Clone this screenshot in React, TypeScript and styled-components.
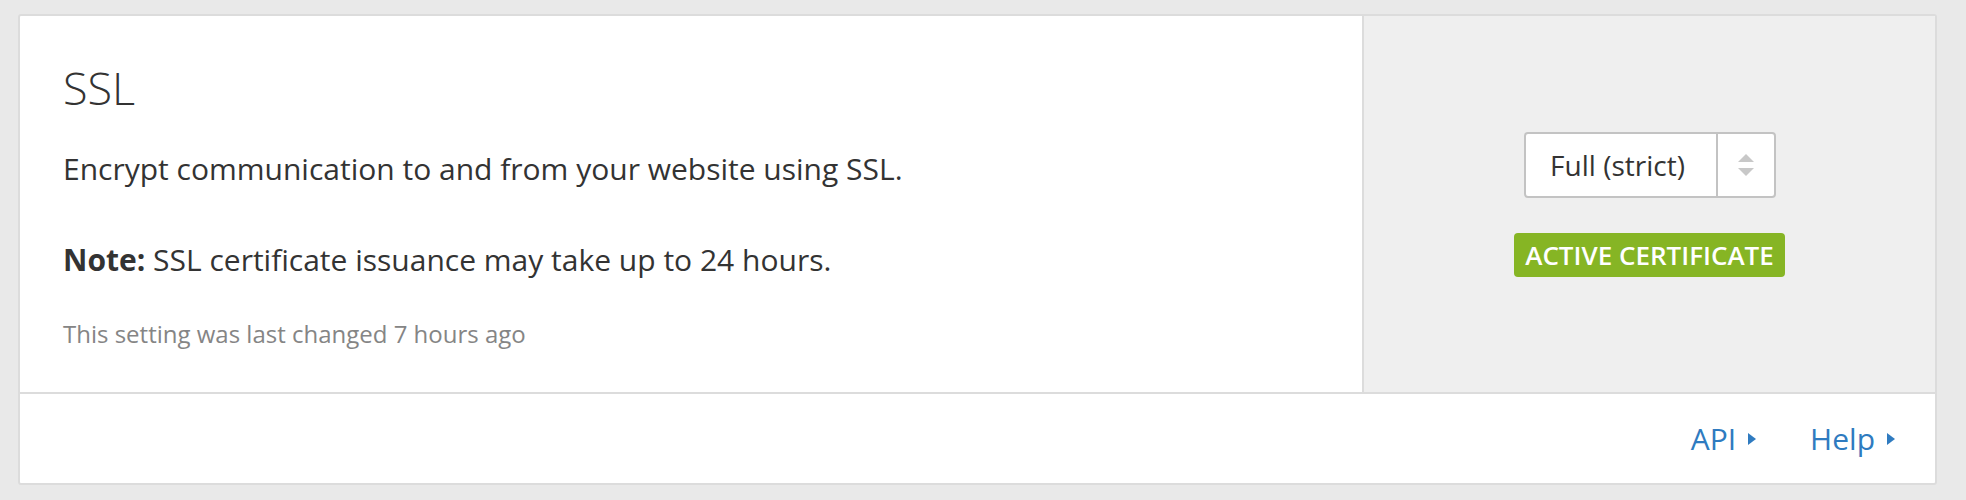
import styled, { createGlobalStyle } from "styled-components";

const GlobalStyle = createGlobalStyle`
  html, body {
    margin: 0;
    padding: 0;
    background: #e9e9e9;
  }
  body {
    font-family: "Open Sans", "Noto Sans", Arial, sans-serif;
    color: #333;
  }
`;

const PageDiv = styled.div`
  padding: 14px 29px 15px 18px;
  box-sizing: border-box;
  height: 500px;
`;

const CardDiv = styled.div`
  background: #fff;
  border: 2px solid #dcdcdc;
  border-radius: 3px;
  overflow: hidden;
`;

const BodyDiv = styled.div`
  display: flex;
  border-bottom: 2px solid #dcdcdc;
`;

const InfoDiv = styled.div`
  flex: 1;
  display: flex;
  flex-direction: column;
  padding: 45px 43px 40px 43px;
  border-right: 2px solid #dcdcdc;
`;

const Title = styled.h3`
  margin: 0 0 31px;
  font-size: 45px;
  line-height: 54px;
  font-weight: 300;
  color: #333;
`;

const Text = styled.p<{ $gap: number }>`
  margin: 0 0 ${(p) => p.$gap}px;
  font-size: 30px;
  line-height: 45px;
  color: #333;

  strong {
    font-weight: 700;
  }
`;

const Changed = styled.div`
  font-size: 24px;
  line-height: 36px;
  color: #858585;
`;

const ControlDiv = styled.div`
  width: 571px;
  background: #efefef;
  display: flex;
  flex-direction: column;
  align-items: center;
  justify-content: center;
  gap: 35px;
`;

const SelectBox = styled.div`
  display: flex;
  width: 252px;
  height: 66px;
  box-sizing: border-box;
  border: 2px solid #c3c3c3;
  border-radius: 4px;
  background: #fff;
`;

const SelectValue = styled.div`
  flex: 1;
  display: flex;
  align-items: center;
  justify-content: center;
  padding-right: 6px;
  font-size: 28px;
  color: #333;
  border-right: 2px solid #c3c3c3;
`;

const SelectArrows = styled.div`
  width: 56px;
  display: flex;
  flex-direction: column;
  align-items: center;
  justify-content: center;
  gap: 6px;
`;

const Badge = styled.span`
  display: inline-block;
  height: 44px;
  line-height: 44px;
  padding: 0 11px;
  border-radius: 4px;
  background: #86b524;
  color: #fff;
  font-size: 26px;
  font-weight: 600;
`;

const FooterDiv = styled.div`
  height: 89px;
  display: flex;
  align-items: center;
  justify-content: flex-end;
  gap: 54px;
  padding-right: 40px;
`;

const FooterLink = styled.a`
  display: inline-flex;
  align-items: center;
  gap: 12px;
  font-size: 30px;
  line-height: 45px;
  color: #2f7bc0;
  text-decoration: none;
`;

const Caret = () => (
  <svg width="8" height="12" viewBox="0 0 8 12">
    <path d="M0 0 L8 6 L0 12 Z" fill="#2f7bc0" />
  </svg>
);

const Arrow = ({ up }: { up?: boolean }) => (
  <svg width="16" height="8" viewBox="0 0 16 8">
    <path d={up ? "M0 8 L8 0 L16 8 Z" : "M0 0 L16 0 L8 8 Z"} fill="#c8c8c8" />
  </svg>
);

export default function App() {
  return (
    <>
      <GlobalStyle />
      <PageDiv>
        <CardDiv>
          <BodyDiv>
            <InfoDiv>
              <Title>SSL</Title>
              <Text $gap={46}>
                Encrypt communication to and from your website using SSL.
              </Text>
              <Text $gap={34}>
                <strong>Note:</strong> SSL certificate issuance may take up to
                24 hours.
              </Text>
              <Changed>This setting was last changed 7 hours ago</Changed>
            </InfoDiv>
            <ControlDiv>
              <SelectBox>
                <SelectValue>Full (strict)</SelectValue>
                <SelectArrows>
                  <Arrow up />
                  <Arrow />
                </SelectArrows>
              </SelectBox>
              <Badge>ACTIVE CERTIFICATE</Badge>
            </ControlDiv>
          </BodyDiv>
          <FooterDiv>
            <FooterLink href="#">
              API <Caret />
            </FooterLink>
            <FooterLink href="#">
              Help <Caret />
            </FooterLink>
          </FooterDiv>
        </CardDiv>
      </PageDiv>
    </>
  );
}
